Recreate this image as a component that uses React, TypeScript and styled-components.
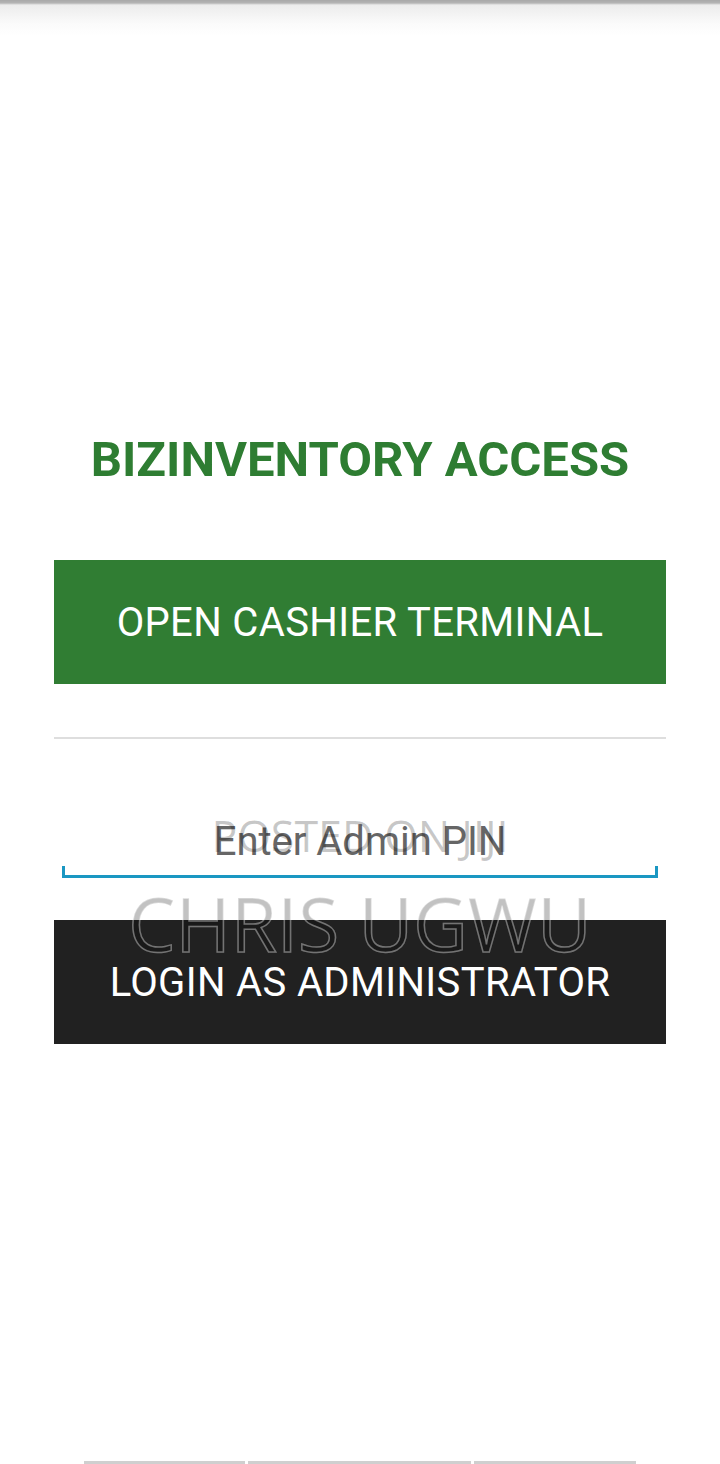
import React from 'react';
import styled, { createGlobalStyle } from 'styled-components';

const GlobalStyle = createGlobalStyle`
  html, body {
    margin: 0;
    padding: 0;
    background: #ffffff;
  }
  * {
    box-sizing: border-box;
  }
`;

const Screen = styled.div`
  position: relative;
  width: 720px;
  min-height: 1464px;
  display: flex;
  flex-direction: column;
  background: #ffffff;
  font-family: Roboto, "Liberation Sans", sans-serif;
  overflow: hidden;
`;

const TopShade = styled.div`
  height: 36px;
  background: linear-gradient(
    #a8a8a8 0,
    #b4b4b4 3px,
    #ececec 5px,
    #fbfbfb 24px,
    #ffffff 36px
  );
`;

const Content = styled.main`
  display: flex;
  flex-direction: column;
  padding: 0 54px;
  margin-top: 394px;
`;

const Title = styled.h1`
  margin: 0;
  font-size: 49px;
  line-height: 60px;
  font-weight: 700;
  color: #2e7d32;
  text-align: center;
`;

const ActionButton = styled.button<{ $tone: 'green' | 'dark'; $gap: number }>`
  display: flex;
  align-items: center;
  justify-content: center;
  width: 100%;
  height: 124px;
  margin-top: ${({ $gap }) => $gap}px;
  border: none;
  border-radius: 0;
  background: ${({ $tone }) => ($tone === 'green' ? '#307d33' : '#212121')};
  color: #ffffff;
  font-family: Roboto, "Liberation Sans", sans-serif;
  font-size: 40px;
  font-weight: 400;
  letter-spacing: 0.35px;
  text-transform: uppercase;
  cursor: pointer;
`;

const Divider = styled.hr`
  margin: 53px 0 0;
  border: none;
  height: 2px;
  background: #dedede;
`;

const PinField = styled.div`
  display: flex;
  flex-direction: column;
  padding: 0 8px;
  margin-top: 80px;
`;

const PinInput = styled.input`
  height: 46px;
  border: none;
  outline: none;
  padding: 0;
  background: transparent;
  text-align: center;
  font-family: Roboto, "Liberation Sans", sans-serif;
  font-size: 40px;
  line-height: 48px;
  color: #333333;

  &::placeholder {
    color: #666666;
  }
`;

const Underline = styled.div`
  height: 12px;
  margin-top: 1px;
  border: 3px solid #1a97c2;
  border-top: none;
`;

const Footer = styled.footer`
  margin-top: auto;
  display: flex;
  gap: 3px;
  padding-left: 84px;
`;

const FooterBar = styled.div<{ $w: number }>`
  width: ${({ $w }) => $w}px;
  height: 3px;
  background: #cfcfcf;
`;

const Watermark = styled.div`
  position: absolute;
  left: 0;
  right: 0;
  top: 815px;
  display: flex;
  flex-direction: column;
  align-items: center;
  pointer-events: none;
  font-family: "Open Sans", "DejaVu Sans", sans-serif;
`;

const MarkSmall = styled.span`
  font-size: 43px;
  line-height: 41px;
  color: rgba(0, 0, 0, 0.22);
`;

const MarkLarge = styled.span`
  font-size: 75px;
  line-height: 75px;
  margin-top: 30px;
  color: rgba(0, 0, 0, 0.24);
  -webkit-text-stroke: 1.5px rgba(255, 255, 255, 0.38);
`;

export default function App() {
  return (
    <>
      <GlobalStyle />
      <Screen>
        <TopShade />
        <Content>
          <Title>BIZINVENTORY ACCESS</Title>
          <ActionButton $tone="green" $gap={70}>
            Open Cashier Terminal
          </ActionButton>
          <Divider />
          <PinField>
            <PinInput type="password" placeholder="Enter Admin PIN" />
            <Underline />
          </PinField>
          <ActionButton $tone="dark" $gap={42}>
            Login as Administrator
          </ActionButton>
        </Content>
        <Footer>
          <FooterBar $w={161} />
          <FooterBar $w={223} />
          <FooterBar $w={162} />
        </Footer>
        <Watermark>
          <MarkSmall>POSTED ON JIJI</MarkSmall>
          <MarkLarge>CHRIS UGWU</MarkLarge>
        </Watermark>
      </Screen>
    </>
  );
}
